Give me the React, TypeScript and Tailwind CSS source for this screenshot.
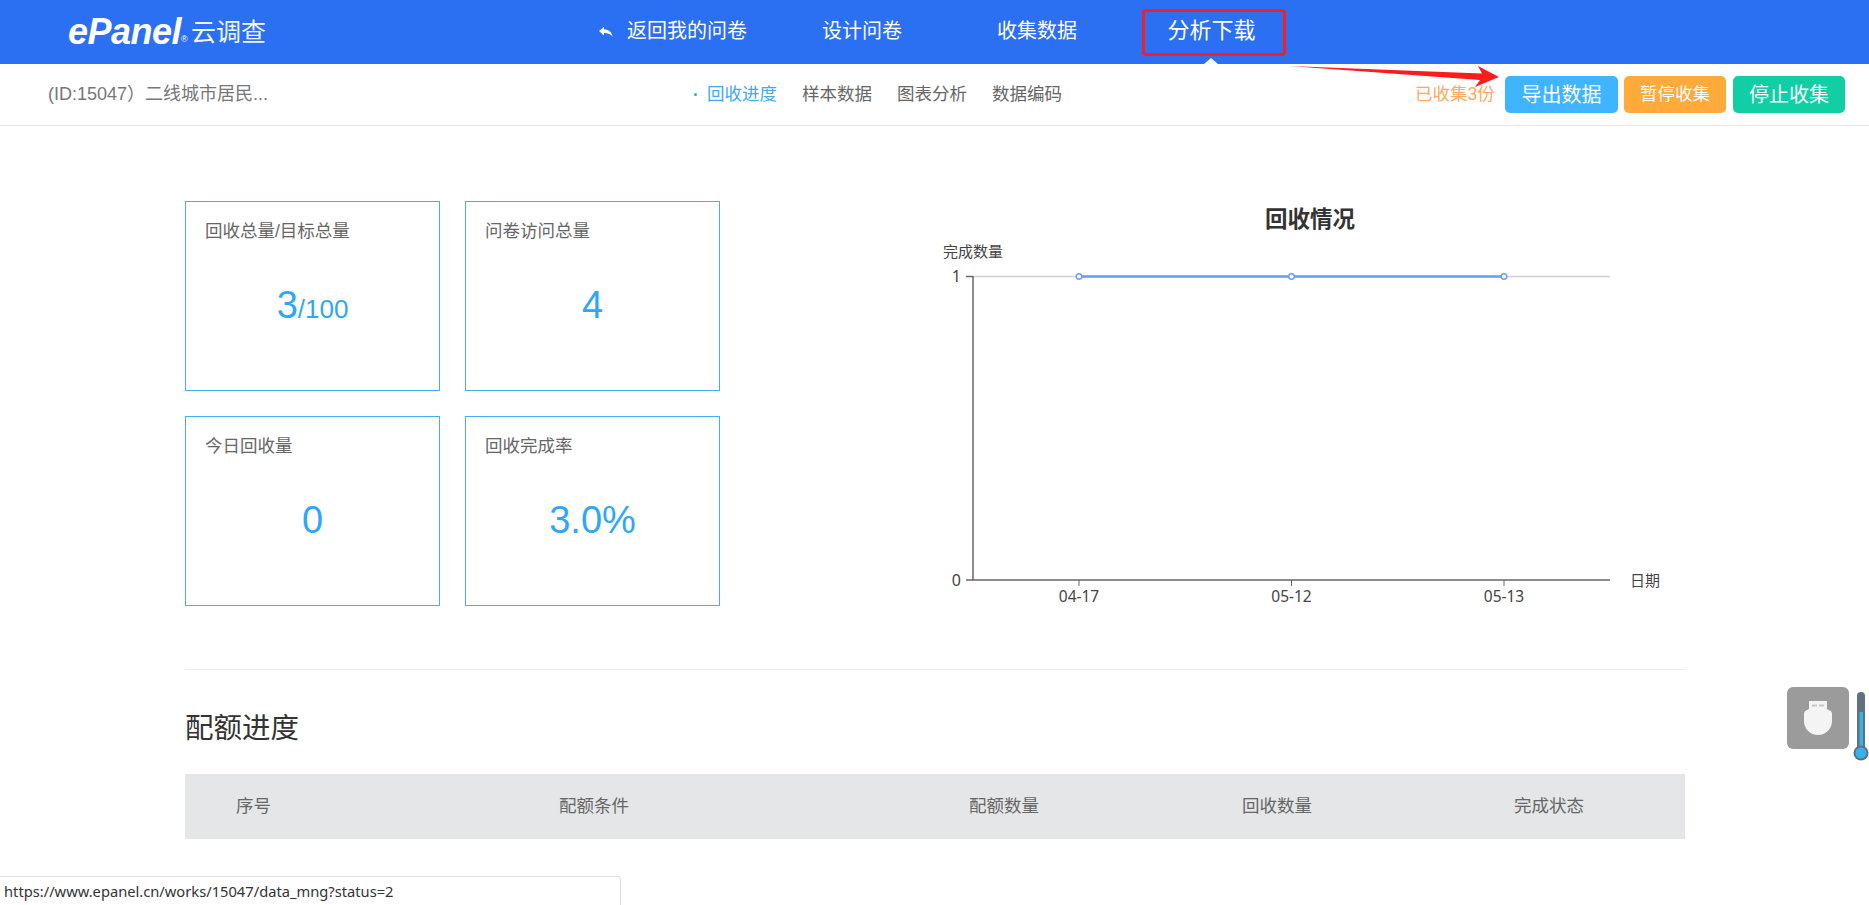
const font = "font-['Liberation_Sans','Noto_Sans_CJK_SC',sans-serif]"

const cards = [
  { title: "回收总量/目标总量", value: "3", suffix: "/100" },
  { title: "问卷访问总量", value: "4" },
  { title: "今日回收量", value: "0" },
  { title: "回收完成率", value: "3.0%" },
]

function StatCard({ title, value, suffix }: { title: string; value: string; suffix?: string }) {
  return (
    <div className="h-[190px] border border-[#45aef5] pl-[19px] pt-[17px]">
      <div className="text-[17.5px] leading-[24px] text-[#666]">{title}</div>
      <div className="mt-[32px] pr-[19px] text-center leading-[60px] text-[#2ea7fb]">
        <span className="text-[38px]">{value}</span>
        {suffix && <span className="text-[26px]">{suffix}</span>}
      </div>
    </div>
  )
}

function RecoveryChart() {
  const points = [139, 351.5, 564]
  const labels = ["04-17", "05-12", "05-13"]
  return (
    <svg width="740" height="416" viewBox="0 0 740 416" className="block font-['Noto_Sans','Noto_Sans_CJK_SC',sans-serif]">
      <text x="370" y="27" textAnchor="middle" fontSize="22.5" fontWeight="700" fill="#333">回收情况</text>
      <text x="3" y="57" fontSize="15" fill="#444">完成数量</text>
      <line x1="33" y1="76.5" x2="670" y2="76.5" stroke="#d0d0d0" strokeWidth="1.5" />
      <line x1="33" y1="76" x2="33" y2="380" stroke="#666" strokeWidth="1.5" />
      <line x1="26" y1="380" x2="670" y2="380" stroke="#666" strokeWidth="1.5" />
      <line x1="26" y1="76.5" x2="33" y2="76.5" stroke="#666" strokeWidth="1.5" />
      <text x="21" y="82" textAnchor="end" fontSize="16" fill="#444">1</text>
      <text x="21" y="385.5" textAnchor="end" fontSize="16" fill="#444">0</text>
      <polyline points="139,76.5 351.5,76.5 564,76.5" fill="none" stroke="#6a9bf4" strokeWidth="2.5" />
      {points.map((x, i) => (
        <g key={x}>
          <circle cx={x} cy="76.5" r="2.8" fill="#fff" stroke="#6a9bf4" strokeWidth="1.4" />
          <line x1={x} y1="380" x2={x} y2="386" stroke="#666" strokeWidth="1" />
          <text x={x} y="402" textAnchor="middle" fontSize="15.5" fill="#444">{labels[i]}</text>
        </g>
      ))}
      <text x="690" y="385.5" fontSize="15" fill="#444">日期</text>
    </svg>
  )
}

export default function App() {
  return (
    <div className={`${font} relative h-[905px] overflow-hidden bg-white`}>
      {/* top nav */}
      <header className="relative flex h-[64px] items-center bg-[#2b70f3] text-white">
        <div className="ml-[68px] flex w-[531px] items-center">
          <span className="w-[113px] text-[36px] font-bold italic leading-none tracking-[-0.5px]">ePanel</span>
          <span className="mt-[14px] w-[10px] text-[9px] leading-none">®</span>
          <span className="text-[25px] leading-none text-[#f0f5ff]">云调查</span>
        </div>
        <svg width="14" height="10" viewBox="0 0 14 10">
          <path d="M0 4 5 0v2.5c5 0 8 2.500 8.500 7.500C12 7 9 6 5 6v2.500z" fill="#fff" />
        </svg>
        <span className="ml-[14px] pb-[2px] text-[20px]">返回我的问卷</span>
        <span className="ml-[75px] pb-[2px] text-[20px]">设计问卷</span>
        <span className="ml-[95px] pb-[2px] text-[20px]">收集数据</span>
        <span className="ml-[65px] flex h-[47px] w-[144px] items-center justify-center rounded-[4px] border-[3px] border-[#fb1c1c] pb-[3px] pr-[5px] text-[22px]">分析下载</span>
        <div className="absolute bottom-0 left-[1204px] h-0 w-0 border-x-[7px] border-b-[6px] border-x-transparent border-b-white" />
      </header>

      {/* sub nav */}
      <div className="flex h-[62px] items-center border-b border-[#e5e5e5] text-[17.5px]">
        <div className="ml-[48px] w-[646px] text-[18px] text-[#777]">(ID:15047）二线城市居民...</div>
        <span className="mr-[10px] h-[3px] w-[3px] rounded-full bg-[#2ea7fb]" />
        <span className="text-[#3fa9f5]">回收进度</span>
        <span className="ml-[25px] text-[#666]">样本数据</span>
        <span className="ml-[25px] text-[#666]">图表分析</span>
        <span className="ml-[25px] text-[#666]">数据编码</span>
        <span className="ml-[353px] w-[90px] text-[#ffa95e]">已收集3份</span>
        <button className="h-[37px] w-[113px] rounded-[5px] bg-[#3fb4ff] text-[20px] text-white">导出数据</button>
        <button className="ml-[6px] h-[37px] w-[102px] rounded-[5px] bg-[#ffaa3a] text-[17.5px] text-white">暂停收集</button>
        <button className="ml-[7px] h-[37px] w-[112px] rounded-[5px] bg-[#10cfa5] text-[20px] text-white">停止收集</button>
      </div>

      {/* main */}
      <main className="ml-[185px] w-[1500px]">
        <section className="flex pt-[75px]">
          <div className="grid w-[535px] grid-cols-[255px_255px] gap-[25px]">
            {cards.map((c) => (
              <StatCard key={c.title} {...c} />
            ))}
          </div>
          <div className="ml-[220px] mt-[-1px] h-[405px]">
            <RecoveryChart />
          </div>
        </section>

        <div className="mt-[63px] border-t border-[#ececec]" />
        <h2 className="mt-[40px] text-[28.5px] leading-[36px] text-[#333]">配额进度</h2>
        <div className="mt-[28px] grid h-[65px] grid-cols-[374px_410px_273px_272px_171px] items-center bg-[#e5e6e8] text-[17.5px] text-[#666]">
          <span className="pl-[51px]">序号</span>
          <span>配额条件</span>
          <span>配额数量</span>
          <span>回收数量</span>
          <span>完成状态</span>
        </div>
      </main>

      {/* annotation arrow */}
      <svg className="pointer-events-none absolute left-[1285px] top-[60px]" width="230" height="40" viewBox="0 0 230 40">
        <polygon points="4,6 197,13.500 193,6 214,17 190,27 195,20" fill="#fb1c1c" />
      </svg>

      {/* floating widget */}
      <div className="absolute left-[1787px] top-[687px] flex h-[62px] w-[62px] items-center justify-center rounded-[6px] bg-[#9b9b9b]">
        <svg width="28" height="34" viewBox="0 0 28 34">
          <path d="M5 0h18v8l3 1.500q2 1 2 3V20a14 14 0 0 1-28 0v-7.500q0-2 2-3L5 8z" fill="#f4f4f4" />
          <rect x="8" y="3.500" width="5" height="2" fill="#c8c8c8" />
          <rect x="15" y="3.500" width="5" height="2" fill="#c8c8c8" />
        </svg>
      </div>
      <svg className="absolute left-[1853px] top-[690px]" width="16" height="72" viewBox="0 0 16 72">
        <rect x="4" y="2" width="8" height="60" rx="4" fill="#607080" />
        <rect x="6.500" y="22" width="3.500" height="40" fill="#35b4e8" />
        <circle cx="8" cy="63" r="7.500" fill="#607080" />
        <circle cx="8" cy="63" r="5.500" fill="#35b4e8" />
      </svg>

      {/* link status bubble */}
      <div className="absolute bottom-0 left-0 flex h-[29px] w-[621px] items-center rounded-tr-[4px] border border-b-0 border-l-0 border-[#dedede] bg-white pl-1 font-['Noto_Sans',sans-serif] text-[14.7px] text-[#333]">
        https://www.epanel.cn/works/15047/data_mng?status=2
      </div>
    </div>
  )
}
